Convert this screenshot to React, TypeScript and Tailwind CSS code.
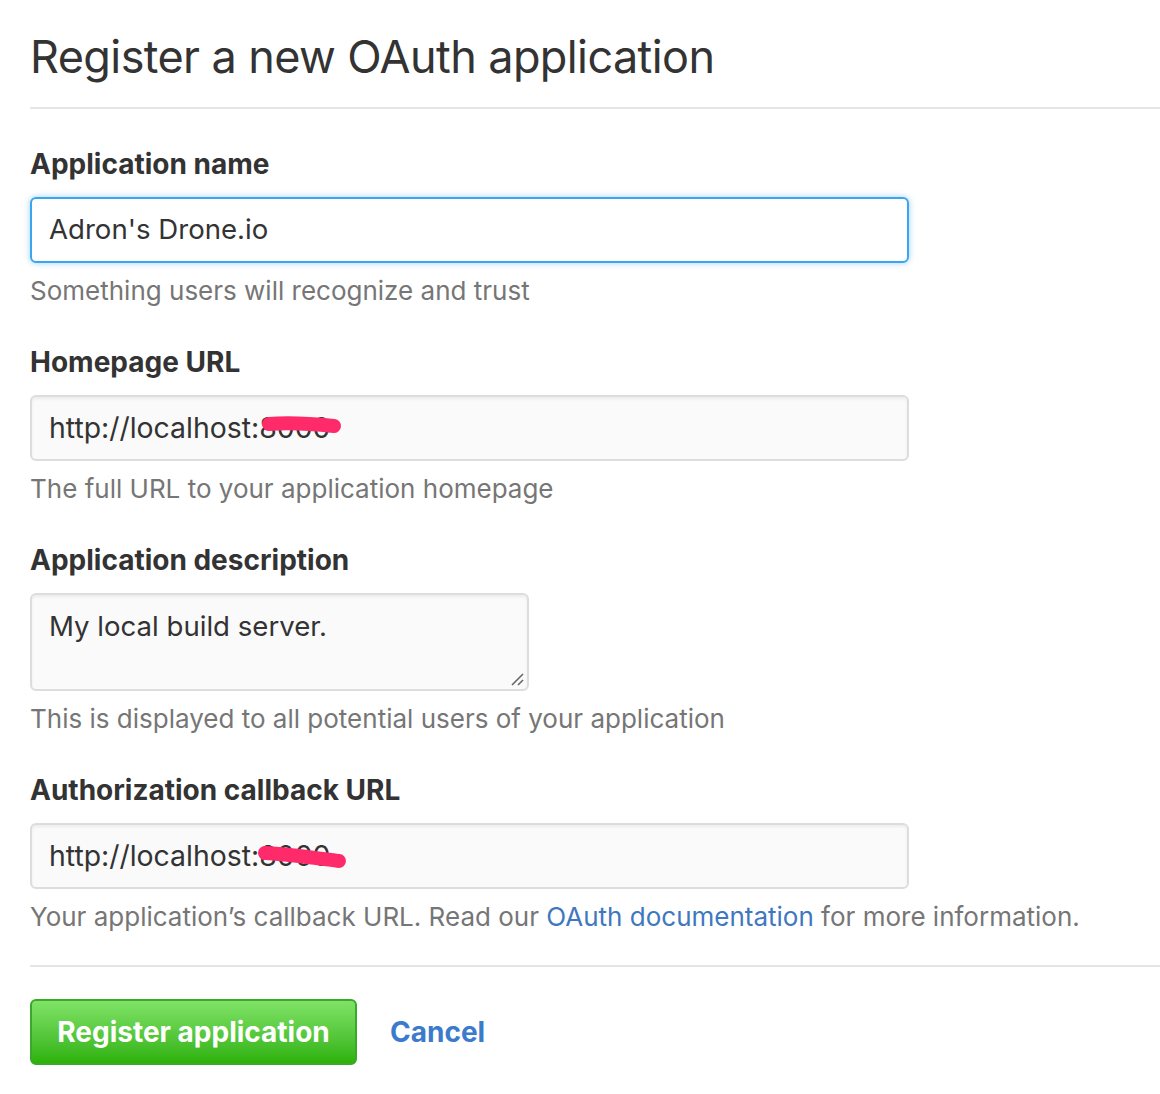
import React from "react";

const font = { fontFamily: "Inter, 'Noto Sans', sans-serif" };

function Label({ children, mt }: { children: React.ReactNode; mt: string }) {
  return (
    <div className={`${mt} h-[40px] leading-[40px] text-[28px] font-bold text-[#333]`}>
      {children}
    </div>
  );
}

function Note({ children }: { children: React.ReactNode }) {
  return (
    <div className="mt-[8px] h-[40px] leading-[40px] text-[26px] text-[#767676]">
      {children}
    </div>
  );
}

function UrlInput({ path }: { path: string }) {
  return (
    <div className="relative mt-[13px] flex h-[66px] w-[879px] items-center rounded-[6px] border-2 border-[#dddddd] bg-[#fafafa] pl-[17px] text-[28.4px] text-[#333] shadow-[inset_0_2px_3px_rgba(0,0,0,0.06)]">
      <span>http://localhost:8000</span>
      <svg className="pointer-events-none absolute left-[-2px] top-[-2px]" width="879" height="66" viewBox="0 0 879 66">
        <path d={path} stroke="#ff2a6a" strokeWidth="14" strokeLinecap="round" fill="none" />
      </svg>
    </div>
  );
}

export default function App() {
  return (
    <div className="min-h-[1094px] bg-white pl-[30px]" style={font}>
      <div className="mt-[27px] h-[60px] leading-[60px] text-[45px] text-[#333] tracking-[-0.6px]">
        Register a new OAuth application
      </div>
      <div className="mt-[20px] border-t-2 border-[#e5e5e5]" />

      <Label mt="mt-[35px]">Application name</Label>
      <div className="mt-[13px] flex h-[66px] w-[879px] items-center rounded-[6px] border-2 border-[#3aa6ef] bg-white pl-[17px] text-[27.6px] text-[#333] shadow-[0_0_6px_rgba(81,167,232,0.55)]">
        Adron's Drone.io
      </div>
      <Note>Something users will recognize and trust</Note>

      <Label mt="mt-[31px]">Homepage URL</Label>
      <UrlInput path="M239 29 C 260 27, 285 29, 304 31" />
      <Note>The full URL to your application homepage</Note>

      <Label mt="mt-[31px]">Application description</Label>
      <div className="relative mt-[13px] h-[98px] w-[499px] rounded-[6px] border-2 border-[#dddddd] bg-[#fafafa] pl-[17px] pt-[11px] text-[27.6px] leading-[40px] text-[#333] shadow-[inset_0_2px_3px_rgba(0,0,0,0.06)]">
        My local build server.
        <svg className="absolute bottom-[3px] right-[3px]" width="14" height="14" viewBox="0 0 14 14">
          <line x1="2" y1="13" x2="13" y2="2" stroke="#666" strokeWidth="1.6" />
          <line x1="8" y1="13" x2="13" y2="8" stroke="#666" strokeWidth="1.6" />
        </svg>
      </div>
      <Note>This is displayed to all potential users of your application</Note>

      <Label mt="mt-[31px]">Authorization callback URL</Label>
      <UrlInput path="M235 30 C 258 31, 285 35, 309 38" />
      <Note>
        Your application’s callback URL. Read our{" "}
        <span className="text-[#4078c0]">OAuth documentation</span> for more information.
      </Note>

      <div className="mt-[28px] border-t-2 border-[#e5e5e5]" />

      <div className="mt-[32px] flex items-center">
        <button className="flex h-[66px] w-[327px] items-center justify-center rounded-[6px] border-2 border-[#3aa82a] bg-gradient-to-b from-[#7fe365] to-[#2cb200] text-[28px] font-bold text-white">
          Register application
        </button>
        <span className="ml-[33px] text-[28px] font-bold text-[#3b7bcb]">Cancel</span>
      </div>
    </div>
  );
}
